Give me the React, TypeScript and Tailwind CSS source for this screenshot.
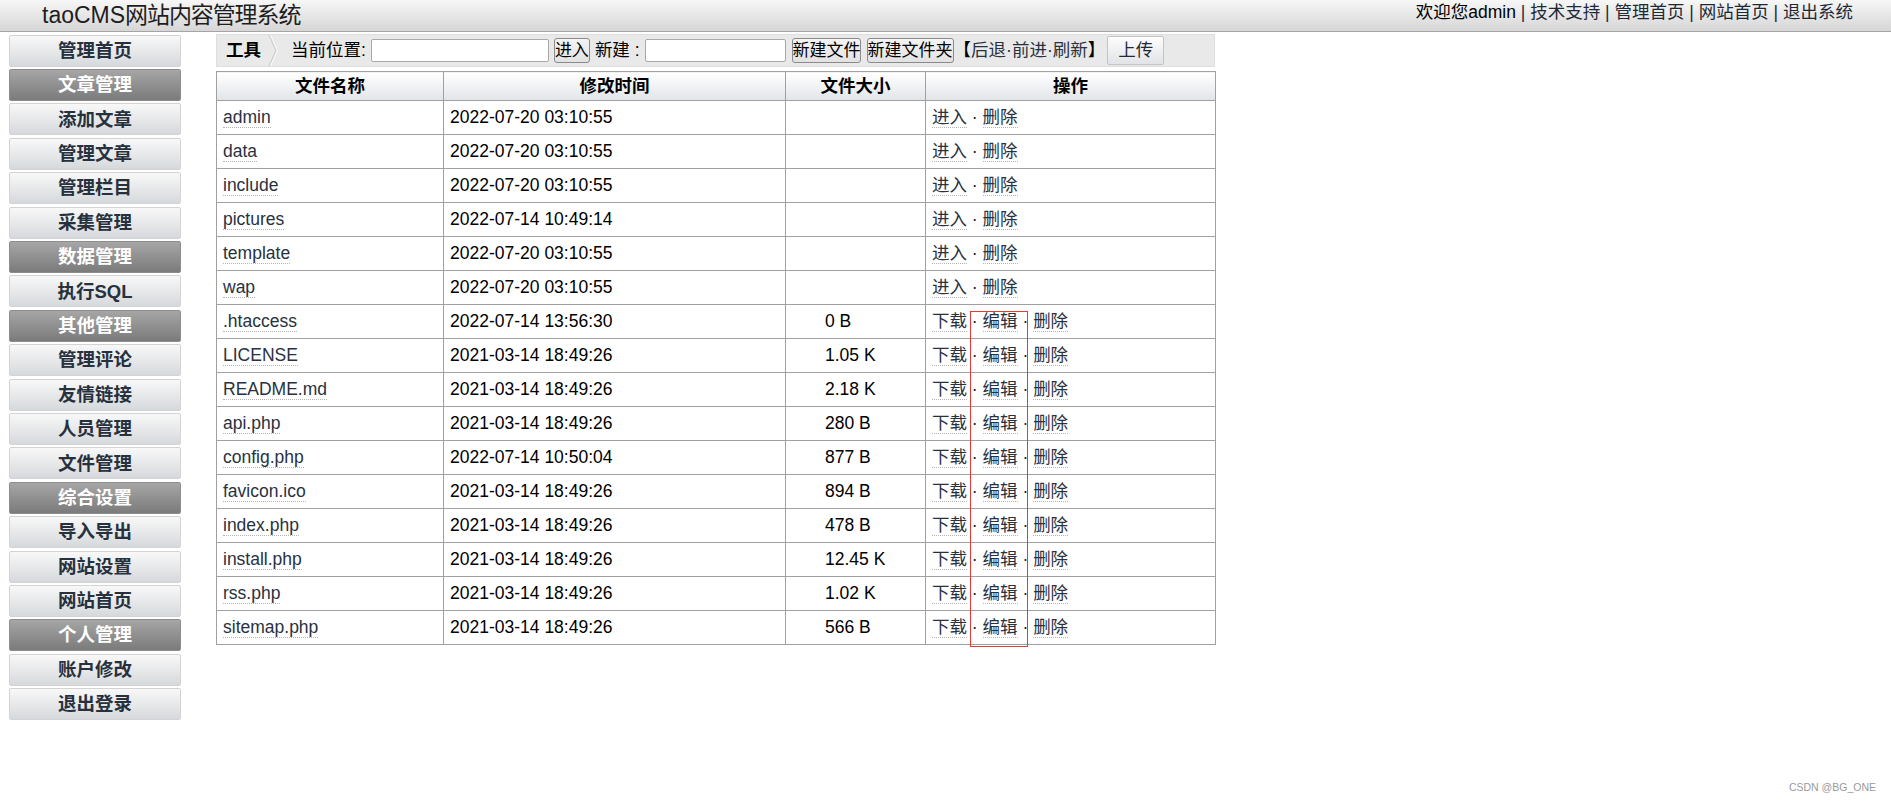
import React from "react";

const menu: { label: string; head?: boolean }[] = [
  { label: "管理首页" },
  { label: "文章管理", head: true },
  { label: "添加文章" },
  { label: "管理文章" },
  { label: "管理栏目" },
  { label: "采集管理" },
  { label: "数据管理", head: true },
  { label: "执行SQL" },
  { label: "其他管理", head: true },
  { label: "管理评论" },
  { label: "友情链接" },
  { label: "人员管理" },
  { label: "文件管理" },
  { label: "综合设置", head: true },
  { label: "导入导出" },
  { label: "网站设置" },
  { label: "网站首页" },
  { label: "个人管理", head: true },
  { label: "账户修改" },
  { label: "退出登录" },
];

type FileRow = { name: string; time: string; size?: string; dir?: boolean };

const files: FileRow[] = [
  { name: "admin", time: "2022-07-20 03:10:55", dir: true },
  { name: "data", time: "2022-07-20 03:10:55", dir: true },
  { name: "include", time: "2022-07-20 03:10:55", dir: true },
  { name: "pictures", time: "2022-07-14 10:49:14", dir: true },
  { name: "template", time: "2022-07-20 03:10:55", dir: true },
  { name: "wap", time: "2022-07-20 03:10:55", dir: true },
  { name: ".htaccess", time: "2022-07-14 13:56:30", size: "0 B" },
  { name: "LICENSE", time: "2021-03-14 18:49:26", size: "1.05 K" },
  { name: "README.md", time: "2021-03-14 18:49:26", size: "2.18 K" },
  { name: "api.php", time: "2021-03-14 18:49:26", size: "280 B" },
  { name: "config.php", time: "2022-07-14 10:50:04", size: "877 B" },
  { name: "favicon.ico", time: "2021-03-14 18:49:26", size: "894 B" },
  { name: "index.php", time: "2021-03-14 18:49:26", size: "478 B" },
  { name: "install.php", time: "2021-03-14 18:49:26", size: "12.45 K" },
  { name: "rss.php", time: "2021-03-14 18:49:26", size: "1.02 K" },
  { name: "sitemap.php", time: "2021-03-14 18:49:26", size: "566 B" },
];

function Link({ children }: { children: React.ReactNode }) {
  return (
    <span className="border-b border-dotted border-[#b4b4b4] text-[#28323f]">
      {children}
    </span>
  );
}

function Sep() {
  return <span className="text-[#222]"> · </span>;
}

export default function App() {
  return (
    <div className="relative min-h-[805px] bg-white font-['Liberation_Sans','Noto_Sans_CJK_SC',sans-serif] text-[17.5px] text-black">
      {/* top bar */}
      <header className="flex h-[32px] items-start justify-between border-b border-[#a5a5a5] bg-linear-to-b from-[#f7f7f7] to-[#d6d6d6]">
        <div className="pl-[42px] text-[23px] leading-[31px] text-[#1e1e1e]">
          taoCMS<span className="text-[23px] tracking-[-1.1px]">网站内容管理系统</span>
        </div>
        <div className="pr-[38px] leading-[25px] text-[#1f2a38]">
          <span className="text-black">欢迎您admin</span> | 技术支持 | 管理首页 | 网站首页 | 退出系统
        </div>
      </header>

      <div className="flex items-start pt-[2px]">
        {/* left menu */}
        <nav className="mt-[0.7px] ml-[9px] flex w-[172px] flex-col gap-[2.4px]">
          {menu.map((m) =>
            m.head ? (
              <div
                key={m.label}
                className="flex h-[32px] items-center justify-center rounded-[2px] border border-[#8d8d8d] bg-linear-to-b from-[#a6a6a6] to-[#7b7b7b] text-[18.5px] font-bold text-white"
              >
                {m.label}
              </div>
            ) : (
              <div
                key={m.label}
                className="flex h-[32px] items-center justify-center rounded-[2px] border border-[#d3d3d3] bg-linear-to-b from-[#f8f8f8] to-[#d6d9dc] text-[18.5px] font-bold text-[#27313d]"
              >
                {m.label}
              </div>
            )
          )}
        </nav>

        <main className="ml-[35px] w-[999px]">
          {/* toolbar */}
          <div className="flex h-[33px] items-center border border-[#dedede] bg-[#e9e9e9] whitespace-nowrap">
            <span className="ml-[9px] font-bold">工具</span>
            <svg className="ml-[7px]" width="10" height="31" viewBox="0 0 10 31">
              <polyline points="1,0 8,15.5 1,31" fill="none" stroke="#cfcfcf" strokeWidth="1.2" />
              <polyline points="2.5,0 9.5,15.5 2.5,31" fill="none" stroke="#fafafa" strokeWidth="1" />
            </svg>
            <span className="ml-[13px]">当前位置:</span>
            <input className="ml-[5px] h-[23px] w-[178px] rounded-[2px] border border-[#a9a9a9] bg-white" />
            <button className="ml-[5px] h-[25px] w-[36px] rounded-[3px] border border-[#8a8a8a] bg-linear-to-b from-[#f4f4f4] to-[#e2e2e2] text-[17px] leading-none">
              进入
            </button>
            <span className="ml-[5px]">新建 :</span>
            <input className="ml-[5px] h-[23px] w-[141px] rounded-[2px] border border-[#a9a9a9] bg-white" />
            <button className="ml-[6px] h-[25px] w-[69px] rounded-[3px] border border-[#8a8a8a] bg-linear-to-b from-[#f4f4f4] to-[#e2e2e2] text-[17px] leading-none">
              新建文件
            </button>
            <button className="ml-[6px] h-[25px] w-[87px] rounded-[3px] border border-[#8a8a8a] bg-linear-to-b from-[#f4f4f4] to-[#e2e2e2] text-[17px] leading-none">
              新建文件夹
            </button>
            <span>
              【<span className="text-[#28323f]">后退·前进·刷新</span>】
            </span>
            <button className="ml-[2px] h-[29px] w-[57px] rounded-[2px] border border-[#c4c4c4] bg-linear-to-b from-[#fdfdfd] to-[#e1e3e6] text-[17.5px] leading-none text-[#1f2a38]">
              上传
            </button>
          </div>

          {/* file list */}
          <div className="relative mt-[4px]">
            <table className="w-[999px] table-fixed border-collapse">
              <colgroup>
                <col className="w-[227px]" />
                <col className="w-[342px]" />
                <col className="w-[140px]" />
                <col className="w-[290px]" />
              </colgroup>
              <thead>
                <tr>
                  {["文件名称", "修改时间", "文件大小", "操作"].map((h) => (
                    <th
                      key={h}
                      className="h-[29px] border border-[#a0a0a0] bg-linear-to-b from-[#ffffff] to-[#e2e5e8] p-0 text-center font-bold"
                    >
                      {h}
                    </th>
                  ))}
                </tr>
              </thead>
              <tbody>
                {files.map((f) => (
                  <tr key={f.name}>
                    <td className="h-[34px] border border-[#a0a0a0] px-[6px]">
                      <Link>{f.name}</Link>
                    </td>
                    <td className="border border-[#a0a0a0] px-[6px]">{f.time}</td>
                    <td className="border border-[#a0a0a0] pl-[39px]">{f.size ?? ""}</td>
                    <td className="border border-[#a0a0a0] px-[6px]">
                      {f.dir ? (
                        <>
                          <Link>进入</Link>
                          <Sep />
                          <Link>删除</Link>
                        </>
                      ) : (
                        <>
                          <Link>下载</Link>
                          <Sep />
                          <Link>编辑</Link>
                          <Sep />
                          <Link>删除</Link>
                        </>
                      )}
                    </td>
                  </tr>
                ))}
              </tbody>
            </table>
            {/* highlight marker drawn over the edit links */}
            <div className="absolute top-[240px] left-[754px] h-[336px] w-[58px] border border-[#e83a35]" />
          </div>
        </main>
      </div>

      <div className="absolute top-[780px] right-[15px] text-[10.5px] text-[#9a9a9a]">CSDN @BG_ONE</div>
    </div>
  );
}
